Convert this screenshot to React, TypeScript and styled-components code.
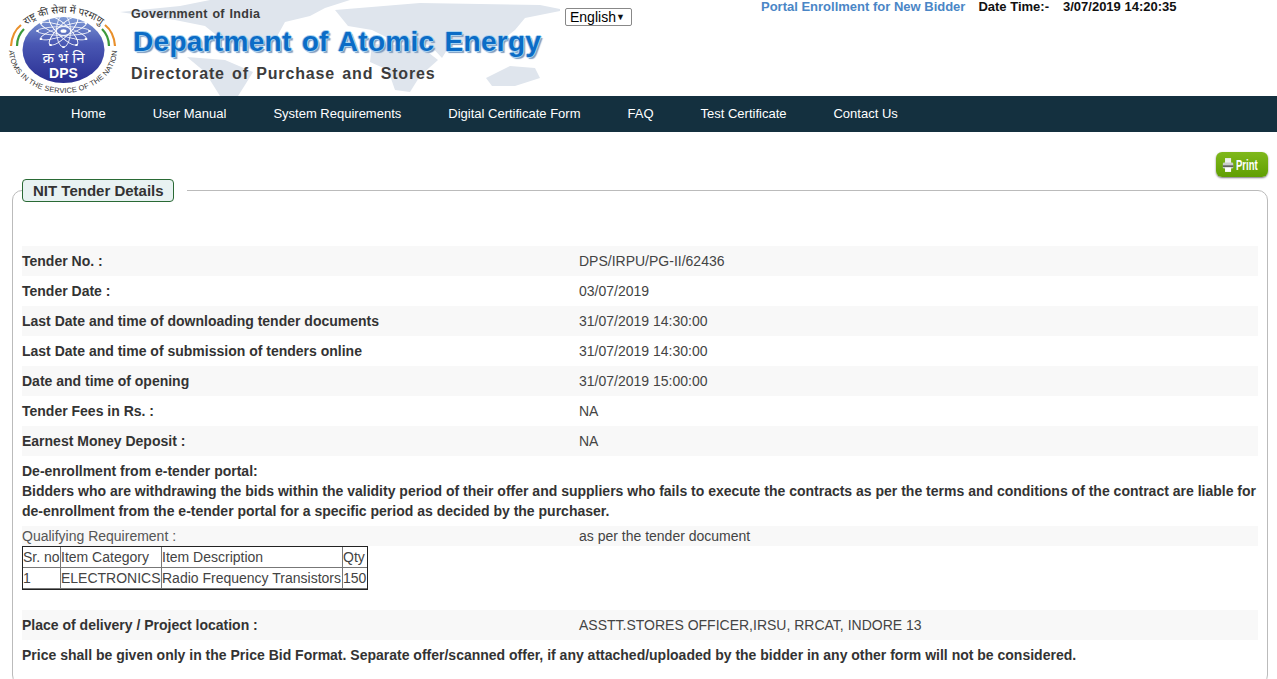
import React from "react";
import styled, { createGlobalStyle } from "styled-components";

const Global = createGlobalStyle`
  html, body { margin: 0; padding: 0; background: #fff; overflow: hidden; height: 679px; }
  body { font-family: "Liberation Sans", Arial, sans-serif; font-size: 14px; color: #333; }
`;

const Page = styled.div`display: flex; flex-direction: column; height: 679px; overflow: hidden;`;
const Header = styled.header`position: relative; display: flex; height: 96px; flex: none; overflow: hidden;`;
const MapArt = styled.svg`position: absolute; left: 120px; top: 0; width: 440px; height: 96px;`;
const LogoSlot = styled.div`position: relative; width: 131px; height: 96px; flex: none; svg { display: block; }`;
const Brand = styled.div`
  position: relative; width: 434px; flex: none; display: flex; flex-direction: column;
  font-family: "Liberation Sans", sans-serif; font-weight: 700;
`;
const GovLine = styled.div`font-size: 12.5px; line-height: 14px; margin-top: 7px; color: #3a3a3a; letter-spacing: .3px; word-spacing: 1px;`;
const DeptLine = styled.div`
  font-size: 28px; line-height: 34px; margin: 4px 0 0 2px; color: #0b6cc6; white-space: nowrap; letter-spacing: .3px; word-spacing: 2px;
  text-shadow: 1px 0 0 #a9d4f2, -1px 0 0 #a9d4f2, 0 1px 0 #a9d4f2, 0 -1px 0 #a9d4f2, 2px 2px 1px #7f9cc0;
`;
const DirLine = styled.div`font-size: 16px; line-height: 20px; margin-top: 5px; color: #3c3c3c; white-space: nowrap; letter-spacing: .85px; word-spacing: 2px;`;
const LangCol = styled.div`width: 196px; flex: none; padding-top: 8px;`;
const LangBox = styled.div`
  display: inline-flex; align-items: center; justify-content: space-between; box-sizing: border-box;
  width: 67px; height: 18px; border: 1px solid #888; border-radius: 2px; padding: 0 6px 0 4px; color: #000; font-size: 14px; background: #fff;
`;
const Caret = styled.span`font-size: 9px; line-height: 1; color: #111;`;
const TopInfo = styled.div`display: flex; align-items: flex-start; font-size: 13px; line-height: 14px; font-weight: 700; white-space: nowrap; color: #111;`;
const EnrollLink = styled.a`color: #4a86c6; margin-right: 13px;`;
const DateLabel = styled.span`margin-right: 14px;`;
const Nav = styled.nav`display: flex; gap: 47px; height: 36px; box-sizing: border-box; padding: 0 0 2px 71px; align-items: center; background: #14303f; flex: none;`;
const NavItem = styled.a`color: #fff; font-size: 13px; white-space: nowrap;`;
const Main = styled.main`padding: 20px 9px 0 12px; display: flex; flex-direction: column; flex: none;`;
const PrintBar = styled.div`display: flex; justify-content: flex-end; height: 26px;`;
const PrintButton = styled.button`
  display: flex; align-items: center; gap: 2px; width: 52px; height: 25px; padding: 0 0 0 6px; border: 0; border-radius: 6px;
  background: linear-gradient(#7fb81c, #609f02); box-shadow: 0 1px 2px #777;
`;
const PrintLabel = styled.span`
  display: inline-block; color: #fff; font: 700 14px "Liberation Sans", sans-serif; transform: scaleX(.68); transform-origin: left center;
`;
const Panel = styled.fieldset`
  margin: 1px 0 0; padding: 44px 9px 0 9px; border: 1px solid #bbb; border-radius: 10px; min-width: 0; height: 506px; box-sizing: border-box;
`;
const PanelTitle = styled.legend`
  padding: 0 13px 0 0; height: 23px;
`;
const TitleChip = styled.span`
  display: block; box-sizing: border-box; padding: 0 10px; height: 23px; line-height: 21px; width: 152px; font-size: 15px; font-weight: 700; color: #333;
  background: #e8f2f2; border: 1px solid #2a6a35; border-radius: 4px; white-space: nowrap;
`;
const Row = styled.div<{ $tone?: boolean; $h?: number }>`
  display: grid; grid-template-columns: 557px 1fr; align-items: center; height: ${p => p.$h ?? 30}px;
  background: ${p => (p.$tone ? "#f8f8f8" : "#fff")};
`;
const Label = styled.div`font-weight: 700; color: #333;`;
const PlainLabel = styled.div`color: #555;`;
const Value = styled.div`color: #444;`;
const Notice = styled.div`font-weight: 700; color: #333; line-height: 20px; text-align: justify; padding: 5px 2px 5px 0;`;
const PriceNote = styled.div`font-weight: 700; color: #333; height: 30px; line-height: 30px; white-space: nowrap;`;
const Items = styled.table`
  border-collapse: separate; border-spacing: 0; table-layout: fixed; width: 346px; border: 1px solid #222; margin: 0 0 20px 0; color: #444; font-size: 14px;
`;
const ItemCol = styled.col<{ $w: number }>`width: ${p => p.$w}px;`;
const Cell = styled.td`
  box-sizing: border-box; border-right: 1px solid #777; border-bottom: 1px solid #777; padding: 0; height: 21px; line-height: 20px; white-space: nowrap; overflow: visible;
  &:last-child { border-right: 0; }
`;

const Logo = () => (
  <svg width="131" height="96" viewBox="0 0 131 96">
    <defs>
      <linearGradient id="g" x1="0" y1="0" x2="0" y2="1">
        <stop offset="0" stopColor="#7f9bd6" />
        <stop offset=".4" stopColor="#4a58b4" />
        <stop offset="1" stopColor="#2a2f93" />
      </linearGradient>
      <path id="topArc" d="M16.5 44 A47 31 0 0 1 110.5 44" />
      <path id="botArc" d="M9 50 A54 43 0 0 0 117 50" />
    </defs>
    <ellipse cx="63.5" cy="50" rx="41" ry="33" fill="url(#g)" />
    <g transform="translate(63.5 31) scale(1 .62)">
      <g fill="none" stroke="#fff" strokeWidth="1">
        {[0, 30, 60, 90, 120, 150].map(a => (
          <ellipse key={a} rx="26" ry="7" transform={`rotate(${a})`} />
        ))}
      </g>
      <g fill="#fff">
        {[0, 30, 60, 90, 120, 150, 180, 210, 240, 270, 300, 330].map(a => (
          <circle key={a} cx="26" cy="0" r="1.5" transform={`rotate(${a})`} />
        ))}
      </g>
      <circle r="3" fill="#fff" />
    </g>
    <path d="M11 46 Q12 32 21 25" fill="none" stroke="#e9902b" strokeWidth="2.2" />
    <path d="M17 46 Q17 36 24 29" fill="none" stroke="#3c9a3c" strokeWidth="2.2" />
    <path d="M115 46 Q114 32 105 25" fill="none" stroke="#e9902b" strokeWidth="2.2" />
    <path d="M109 46 Q109 36 102 29" fill="none" stroke="#3c9a3c" strokeWidth="2.2" />
    <text fontSize="10" fill="#333" fontFamily="'Noto Sans', sans-serif">
      <textPath href="#topArc" startOffset="50%" textAnchor="middle">राष्ट्र की सेवा में परमाणु</textPath>
    </text>
    <text fontSize="7.4" fill="#333" fontFamily="'Liberation Sans', sans-serif" letterSpacing=".2">
      <textPath href="#botArc" startOffset="50%" textAnchor="middle">ATOMS IN THE SERVICE OF THE NATION</textPath>
    </text>
    <text x="63.5" y="63" textAnchor="middle" fontSize="15" fill="#fff" fontFamily="'Noto Sans', sans-serif">क्र भं नि</text>
    <text x="63.5" y="78" textAnchor="middle" fontSize="14" fontWeight="700" fill="#fff" fontFamily="'Liberation Sans', sans-serif">DPS</text>
  </svg>
);

const WorldMap = () => (
  <MapArt viewBox="0 0 440 96" aria-hidden="true">
    <g fill="#dfe5ed">
      <path d="M0 12 L60 6 L90 0 L230 0 L205 8 L190 16 L165 22 L155 40 L135 50 L118 46 L100 38 L85 26 L55 20 L25 16Z" />
      <path d="M67 57 L105 60 L133 72 L125 85 L118 96 L100 96 L85 72Z" />
      <path d="M215 10 L300 3 L420 5 L445 10 L405 18 L395 30 L370 50 L350 40 L330 45 L322 58 L310 45 L285 42 L268 38 L252 30 L228 26Z" />
      <path d="M252 44 L300 46 L318 60 L300 76 L290 92 L275 90 L268 70 L250 62Z" />
      <path d="M366 78 L390 66 L415 68 L420 78 L395 86 L372 86Z" />
    </g>
  </MapArt>
);

const PrinterIcon = () => (
  <svg width="14" height="18" viewBox="0 0 14 18">
    <rect x="3.5" y="1" width="7" height="6" fill="#eef0ee" />
    <rect x="1" y="6" width="12" height="7" rx="1.5" fill="#c9cfc9" />
    <rect x="1" y="9.5" width="12" height="1.6" fill="#4a4a4a" />
    <rect x="3.5" y="12" width="7" height="5" fill="#fff" />
  </svg>
);

const nav = ["Home", "User Manual", "System Requirements", "Digital Certificate Form", "FAQ", "Test Certificate", "Contact Us"];
const rows: [string, string][] = [
  ["Tender No. :", "DPS/IRPU/PG-II/62436"],
  ["Tender Date :", "03/07/2019"],
  ["Last Date and time of downloading tender documents", "31/07/2019 14:30:00"],
  ["Last Date and time of submission of tenders online", "31/07/2019 14:30:00"],
  ["Date and time of opening", "31/07/2019 15:00:00"],
  ["Tender Fees in Rs. :", "NA"],
  ["Earnest Money Deposit :", "NA"],
];

export default function App() {
  return (
    <Page>
      <Global />
      <Header>
        <WorldMap />
        <LogoSlot><Logo /></LogoSlot>
        <Brand>
          <GovLine>Government of India</GovLine>
          <DeptLine>Department of Atomic Energy</DeptLine>
          <DirLine>Directorate of Purchase and Stores</DirLine>
        </Brand>
        <LangCol>
          <LangBox>English <Caret>▼</Caret></LangBox>
        </LangCol>
        <TopInfo>
          <EnrollLink>Portal Enrollment for New Bidder</EnrollLink>
          <DateLabel>Date Time:-</DateLabel>
          <span>3/07/2019 14:20:35</span>
        </TopInfo>
      </Header>
      <Nav>{nav.map(n => <NavItem key={n}>{n}</NavItem>)}</Nav>
      <Main>
        <PrintBar>
          <PrintButton><PrinterIcon /><PrintLabel>Print</PrintLabel></PrintButton>
        </PrintBar>
        <Panel>
          <PanelTitle><TitleChip>NIT Tender Details</TitleChip></PanelTitle>
          {rows.map(([l, v], i) => (
            <Row key={l} $tone={i % 2 === 0}><Label>{l}</Label><Value>{v}</Value></Row>
          ))}
          <Notice>
            De-enrollment from e-tender portal:<br />
            Bidders who are withdrawing the bids within the validity period of their offer and suppliers who fails to execute the contracts as per the terms and conditions of the contract are liable for de-enrollment from the e-tender portal for a specific period as decided by the purchaser.
          </Notice>
          <Row $tone $h={20}><PlainLabel>Qualifying Requirement :</PlainLabel><Value>as per the tender document</Value></Row>
          <Items>
            <colgroup>
              <ItemCol $w={38} /><ItemCol $w={101} /><ItemCol $w={181} /><ItemCol $w={24} />
            </colgroup>
            <tbody>
              <tr><Cell>Sr. no</Cell><Cell>Item Category</Cell><Cell>Item Description</Cell><Cell>Qty</Cell></tr>
              <tr><Cell>1</Cell><Cell>ELECTRONICS</Cell><Cell>Radio Frequency Transistors</Cell><Cell>150</Cell></tr>
            </tbody>
          </Items>
          <Row $tone><Label>Place of delivery / Project location :</Label><Value>ASSTT.STORES OFFICER,IRSU, RRCAT, INDORE 13</Value></Row>
          <PriceNote>Price shall be given only in the Price Bid Format. Separate offer/scanned offer, if any attached/uploaded by the bidder in any other form will not be considered.</PriceNote>
        </Panel>
      </Main>
    </Page>
  );
}
